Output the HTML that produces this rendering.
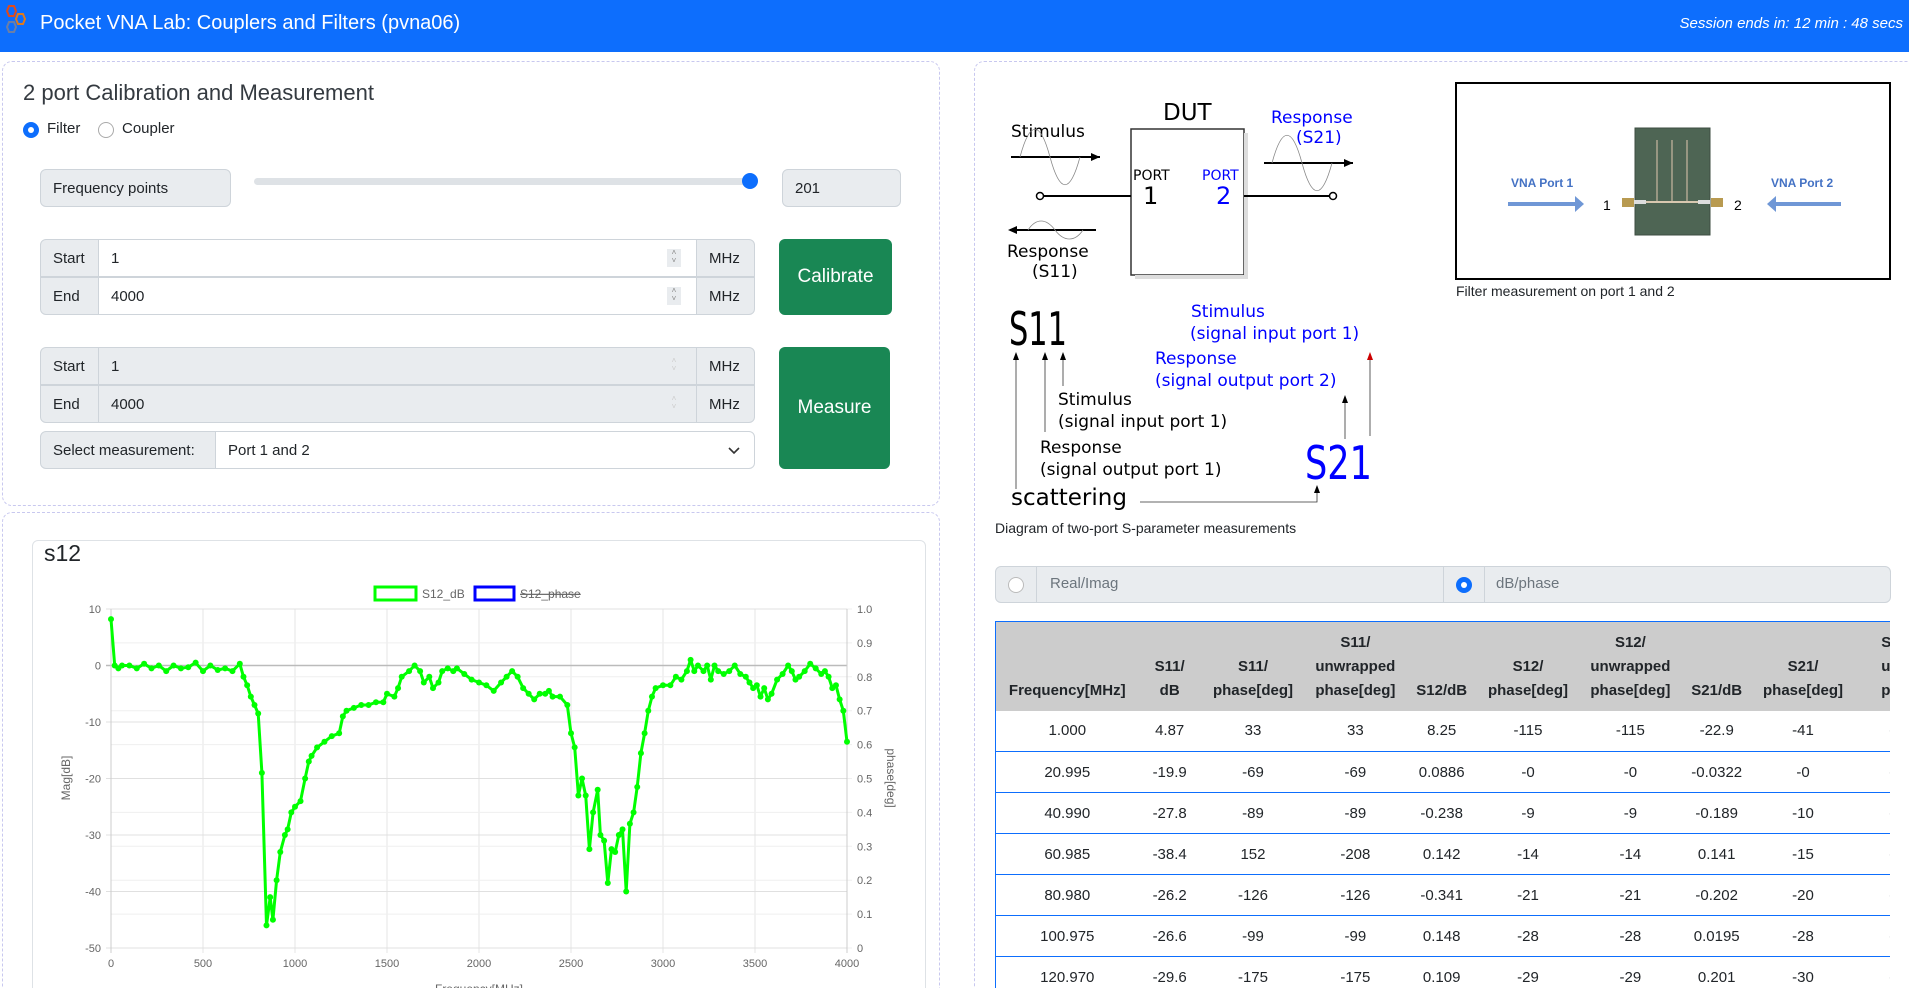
<!DOCTYPE html>
<html><head><meta charset="utf-8">
<style>
*{box-sizing:border-box;margin:0;padding:0}
html,body{width:1909px;height:988px;overflow:hidden}
body{background:#fff;font-family:"Liberation Sans",sans-serif;color:#212529}
#wrap{position:relative;width:1909px;height:988px;overflow:hidden}
.abs{position:absolute}
.nav{left:0;top:0;width:1909px;height:52px;background:#0d6efd}
.card{border:1px dashed #c8c8ef;border-radius:10px}
.lbl{position:absolute;background:#e9ecef;border:1px solid #ced4da;font-size:15px;display:flex;align-items:center;padding-left:12px}
.inp{position:absolute;background:#fff;border:1px solid #ced4da;font-size:15px;display:flex;align-items:center;padding-left:12px}
.btn{position:absolute;background:#198754;color:#fff;border-radius:6px;font-size:19px;display:flex;align-items:center;justify-content:center}
.spin{position:absolute;width:14px;height:18px;background:#e9ecef;font-size:8px;color:#888;line-height:8px;text-align:center}
table{border-collapse:collapse;font-size:15px;table-layout:fixed}
</style></head><body><div id="wrap">
<div class="abs nav"></div>
<svg class="abs" style="left:2px;top:4px" width="30" height="32" viewBox="0 0 30 32">
<polygon points="7,2 12,2 14,7 12,12 7,12 5,7" fill="none" stroke="#e04a1c" stroke-width="2"/>
<polygon points="16,10 21,10 23,15 21,20 16,20 14,15" fill="none" stroke="#e07a1c" stroke-width="2"/>
<polygon points="7,18 12,18 14,23 12,28 7,28 5,23" fill="none" stroke="#6b7fa6" stroke-width="2"/>
</svg>
<div class="abs" style="left:40px;top:12px;font-size:20px;color:#fff">Pocket VNA Lab: Couplers and Filters (pvna06)</div>
<div class="abs" style="right:6px;top:15px;font-size:15px;color:#fff;font-style:italic">Session ends in: 12 min : 48 secs</div>

<div class="abs card" style="left:2px;top:61px;width:938px;height:445px"></div>
<div class="abs" style="left:23px;top:80px;font-size:22px;color:#343a40">2 port Calibration and Measurement</div>
<div class="abs" style="left:23px;top:122px;width:16px;height:16px;border-radius:50%;background:#0d6efd"></div>
<div class="abs" style="left:28px;top:127px;width:6px;height:6px;border-radius:50%;background:#fff"></div>
<div class="abs" style="left:47px;top:120px;font-size:15px">Filter</div>
<div class="abs" style="left:98px;top:122px;width:16px;height:16px;border-radius:50%;border:1px solid #aaa"></div>
<div class="abs" style="left:122px;top:120px;font-size:15px">Coupler</div>

<div class="lbl" style="left:40px;top:169px;width:191px;height:38px;border-radius:6px">Frequency points</div>
<div class="abs" style="left:254px;top:178px;width:503px;height:7px;border-radius:4px;background:#dee2e6"></div>
<div class="abs" style="left:742px;top:173px;width:16px;height:16px;border-radius:50%;background:#0d6efd"></div>
<div class="lbl" style="left:782px;top:169px;width:119px;height:38px;border-radius:6px">201</div>

<div class="lbl" style="left:40px;top:239px;width:59px;height:38px;border-radius:6px 0 0 0">Start</div>
<div class="inp" style="left:98px;top:239px;width:599px;height:38px">1</div>
<div class="spin" style="left:667px;top:249px">˄<br>˅</div>
<div class="lbl" style="left:696px;top:239px;width:59px;height:38px;border-radius:0 6px 0 0">MHz</div>
<div class="lbl" style="left:40px;top:277px;width:59px;height:38px;border-radius:0 0 0 6px">End</div>
<div class="inp" style="left:98px;top:277px;width:599px;height:38px">4000</div>
<div class="spin" style="left:667px;top:287px">˄<br>˅</div>
<div class="lbl" style="left:696px;top:277px;width:59px;height:38px;border-radius:0 0 6px 0">MHz</div>
<div class="btn" style="left:779px;top:239px;width:113px;height:76px">Calibrate</div>

<div class="lbl" style="left:40px;top:347px;width:59px;height:38px;border-radius:6px 0 0 0">Start</div>
<div class="lbl" style="left:98px;top:347px;width:599px;height:38px">1</div>
<div class="lbl" style="left:696px;top:347px;width:59px;height:38px;border-radius:0 6px 0 0">MHz</div>
<div class="lbl" style="left:40px;top:385px;width:59px;height:38px;border-radius:0 0 0 6px">End</div>
<div class="lbl" style="left:98px;top:385px;width:599px;height:38px">4000</div>
<div class="lbl" style="left:696px;top:385px;width:59px;height:38px;border-radius:0 0 6px 0">MHz</div>
<div class="spin" style="left:667px;top:357px;background:none;color:#ccc">˄<br>˅</div>
<div class="spin" style="left:667px;top:395px;background:none;color:#ccc">˄<br>˅</div>
<div class="lbl" style="left:40px;top:431px;width:176px;height:38px;border-radius:6px 0 0 6px">Select measurement:</div>
<div class="inp" style="left:215px;top:431px;width:540px;height:38px;border-radius:0 6px 6px 0">Port 1 and 2</div>
<svg class="abs" style="left:727px;top:444px" width="14" height="12"><path d="M2 4 L7 9 L12 4" fill="none" stroke="#333" stroke-width="1.6"/></svg>
<div class="btn" style="left:779px;top:347px;width:111px;height:122px">Measure</div>

<div class="abs card" style="left:2px;top:512px;width:938px;height:560px"></div>
<div class="abs" style="left:32px;top:540px;width:894px;height:520px;border:1px solid #dee2e6;border-radius:6px"></div>
<div class="abs" style="left:44px;top:540px;font-size:23px">s12</div>
<svg class="abs" style="left:0;top:0" width="940" height="988" id="chart">
<g id="grid"></g>
<rect x="375" y="587" width="41" height="13" fill="none" stroke="#00ff00" stroke-width="3"/>
<text x="422" y="598" font-size="12" fill="#666" font-family="Liberation Sans">S12_dB</text>
<rect x="475" y="587" width="39" height="13" fill="none" stroke="#0000ff" stroke-width="3"/>
<text x="520" y="598" font-size="12" fill="#666" font-family="Liberation Sans" text-decoration="line-through">S12_phase</text>
<text transform="translate(70,778) rotate(-90)" text-anchor="middle" font-size="12" fill="#666" font-family="Liberation Sans">Mag[dB]</text>
<text transform="translate(887,778) rotate(90)" text-anchor="middle" font-size="12" fill="#666" font-family="Liberation Sans">phase[deg]</text>
<text x="479" y="993" text-anchor="middle" font-size="12" fill="#666" font-family="Liberation Sans">Frequency[MHz]</text>
<g id="data"></g>
</svg>

<div class="abs card" style="left:974px;top:61px;width:950px;height:1000px"></div>
<svg class="abs" style="left:0;top:0" width="1909" height="560" font-family="DejaVu Sans,sans-serif">
<text x="1163" y="120" font-size="23">DUT</text>
<rect x="1131" y="129" width="113" height="146" fill="#fff" stroke="#333" stroke-width="1.5"/>
<rect x="1244" y="133" width="4" height="146" fill="#ddd"/>
<rect x="1135" y="275" width="113" height="4" fill="#ddd"/>
<text x="1011" y="137" font-size="17">Stimulus</text>
<path d="M1011 157 H1100" stroke="#000" stroke-width="2"/><path d="M1100 157 l-9 -4 v8z"/>
<path d="M1020 157 C1030 120 1040 120 1050 157 S1070 194 1080 157" fill="none" stroke="#888" stroke-width="0.8"/>
<text x="1133" y="180" font-size="14">PORT</text><text x="1143" y="204" font-size="24">1</text>
<text x="1202" y="180" font-size="14" fill="#00f">PORT</text><text x="1216" y="204" font-size="24" fill="#00f">2</text>
<path d="M1043 196 H1131 M1244 196 H1329" stroke="#000" stroke-width="2"/>
<circle cx="1040" cy="196" r="3.5" fill="#fff" stroke="#000" stroke-width="1.5"/>
<circle cx="1333" cy="196" r="3.5" fill="#fff" stroke="#000" stroke-width="1.5"/>
<text x="1271" y="123" font-size="17" fill="#00f">Response</text><text x="1296" y="143" font-size="17" fill="#00f">(S21)</text>
<path d="M1264 163 H1353" stroke="#000" stroke-width="2"/><path d="M1353 163 l-9 -4 v8z"/>
<path d="M1272 163 C1282 126 1292 126 1302 163 S1322 200 1332 163" fill="none" stroke="#888" stroke-width="0.8"/>
<path d="M1010 230 H1096" stroke="#000" stroke-width="2"/><path d="M1008 230 l9 -4 v8z"/>
<path d="M1028 230 C1036 218 1046 218 1055 230 S1075 242 1083 230" fill="none" stroke="#888" stroke-width="0.8"/>
<text x="1007" y="257" font-size="17">Response</text><text x="1032" y="277" font-size="17">(S11)</text>
<text x="1009" y="345" font-size="46" textLength="58" lengthAdjust="spacingAndGlyphs">S11</text>
<text x="1191" y="317" font-size="17" fill="#00f">Stimulus</text>
<text x="1190" y="339" font-size="17" fill="#00f">(signal input port 1)</text>
<text x="1155" y="364" font-size="17" fill="#00f">Response</text>
<text x="1155" y="386" font-size="17" fill="#00f">(signal output port 2)</text>
<text x="1058" y="405" font-size="17">Stimulus</text>
<text x="1058" y="427" font-size="17">(signal input port 1)</text>
<text x="1040" y="453" font-size="17">Response</text>
<text x="1040" y="475" font-size="17">(signal output port 1)</text>
<text x="1305" y="479" font-size="46" fill="#00f" textLength="67" lengthAdjust="spacingAndGlyphs">S21</text>
<text x="1011" y="505" font-size="23">scattering</text>
<g stroke="#333" stroke-width="0.8" fill="none">
<path d="M1016 489 V356 M1045 432 V356 M1063 386 V356 M1345 439 V398 M1140 502 H1317 V488"/>
</g>
<path d="M1370 436 V356" stroke="#333" stroke-width="0.8"/>
<path d="M1016 352 l-3 8 h6z M1045 352 l-3 8 h6z M1063 352 l-3 8 h6z M1345 395 l-3 8 h6z M1317 485 l-3 8 h6z"/>
<path d="M1370 352 l-3 8 h6z" fill="#c00"/>
<text x="995" y="533" font-size="14" fill="#212529" font-family="Liberation Sans">Diagram of two-port S-parameter measurements</text>
<rect x="1456" y="83" width="434" height="196" fill="#fff" stroke="#000" stroke-width="2"/>
<text x="1456" y="296" font-size="14" fill="#212529" font-family="Liberation Sans">Filter measurement on port 1 and 2</text>
<rect x="1635" y="128" width="75" height="107" fill="#4e6554" stroke="#3d4d42"/>
<path d="M1657 140 V202 M1672 140 V202 M1687 140 V202" stroke="#c8b8a0" stroke-width="1.2"/>
<path d="M1640 202 H1705" stroke="#d8c8b0" stroke-width="2"/>
<rect x="1622" y="198" width="12" height="9" fill="#b89a50"/><rect x="1711" y="198" width="12" height="9" fill="#b89a50"/>
<rect x="1634" y="200" width="12" height="4" fill="#ddd"/><rect x="1698" y="200" width="12" height="4" fill="#ddd"/>
<text x="1511" y="187" font-size="12" font-weight="bold" fill="#4472c4" font-family="Liberation Sans">VNA Port 1</text>
<text x="1771" y="187" font-size="12" font-weight="bold" fill="#4472c4" font-family="Liberation Sans">VNA Port 2</text>
<path d="M1508 204 H1576" stroke="#6f97d6" stroke-width="4"/><path d="M1584 204 l-9 -8 v16z" fill="#6f97d6"/>
<path d="M1776 204 H1841" stroke="#6f97d6" stroke-width="4"/><path d="M1767 204 l9 -8 v16z" fill="#6f97d6"/>
<text x="1603" y="210" font-size="14" font-family="Liberation Sans">1</text>
<text x="1734" y="210" font-size="14" font-family="Liberation Sans">2</text>
</svg>

<div class="abs" style="left:995px;top:566px;width:896px;height:37px;background:#e9ecef;border:1px solid #ced4da;border-radius:6px"></div>
<div class="abs" style="left:1036px;top:566px;width:1px;height:37px;background:#ced4da"></div>
<div class="abs" style="left:1443px;top:566px;width:1px;height:37px;background:#ced4da"></div>
<div class="abs" style="left:1484px;top:566px;width:1px;height:37px;background:#ced4da"></div>
<div class="abs" style="left:1008px;top:577px;width:16px;height:16px;border-radius:50%;border:1px solid #bbb;background:#fff"></div>
<div class="abs" style="left:1456px;top:577px;width:16px;height:16px;border-radius:50%;background:#0d6efd"></div>
<div class="abs" style="left:1461px;top:582px;width:6px;height:6px;border-radius:50%;background:#fff"></div>
<div class="abs" style="left:1050px;top:575px;font-size:15px;color:#6c757d">Real/Imag</div>
<div class="abs" style="left:1496px;top:575px;font-size:15px;color:#6c757d">dB/phase</div>

<div class="abs" style="left:995px;top:621px;width:895px;height:380px;overflow:hidden;border-left:1.5px solid #0d6efd">
<table id="tbl" style="position:absolute;left:0;top:0;width:1030px"></table>
</div>
</div>
<script>
(function(){
var ns="http://www.w3.org/2000/svg";
var g=document.getElementById('grid'),d=document.getElementById('data');
function el(p,tag,a){var e=document.createElementNS(ns,tag);for(var k in a)e.setAttribute(k,a[k]);p.appendChild(e);return e;}
function X(f){return 111+f/4000*736}function Y(db){return 609+(10-db)*5.65}
for(var i=0;i<=8;i++){var x=X(i*500);el(g,'line',{x1:x,y1:609,x2:x,y2:953,stroke:'#e6e6e6'});var t=el(g,'text',{x:x,y:967,'text-anchor':'middle','font-size':11,fill:'#666','font-family':'Liberation Sans'});t.textContent=i*500;}
for(var i=0;i<=10;i++){var y=609+i*33.9;el(g,'line',{x1:111,y1:y,x2:852,y2:y,stroke:'#efefef'});var t=el(g,'text',{x:857,y:y+4,'font-size':11,fill:'#666','font-family':'Liberation Sans'});var v=(1-i/10);t.textContent=i==10?'0':v.toFixed(1);}
for(var i=0;i<=6;i++){var y=609+i*56.5;el(g,'line',{x1:106,y1:y,x2:847,y2:y,stroke:i==1?'#bbb':'#e0e0e0','stroke-width':i==1?1.5:1});var t=el(g,'text',{x:101,y:y+4,'text-anchor':'end','font-size':11,fill:'#666','font-family':'Liberation Sans'});t.textContent=10-i*10;}
el(g,'line',{x1:111,y1:609,x2:111,y2:953,stroke:'#ccc'});el(g,'line',{x1:847,y1:609,x2:847,y2:953,stroke:'#ccc'});
var P=[[0,8.2],[20,0],[40,-0.5],[60,0],[100,0],[140,-0.5],[180,0.3],[220,-0.5],[260,0],[300,-1],[340,0],[380,-0.5],[420,-0.3],[460,0.5],[500,-1],[540,0],[580,-0.8],[620,-0.5],[660,-1],[700,0.3],[720,-2],[740,-3.5],[760,-5.5],[780,-7],[800,-8.5],[820,-19],[845,-46],[865,-41],[880,-45],[900,-38],[920,-33],[945,-30],[960,-29],[980,-26],[1000,-25],[1030,-24],[1055,-20],[1075,-17],[1090,-16],[1120,-14.5],[1160,-13.5],[1200,-12.5],[1240,-12],[1260,-9],[1280,-8],[1320,-7.5],[1360,-7],[1400,-7],[1440,-6.5],[1480,-6.5],[1500,-5],[1540,-5.5],[1560,-4],[1580,-2],[1620,-1],[1650,0],[1680,-1],[1700,-3],[1730,-2],[1750,-4],[1780,-3],[1800,-1],[1830,-0.5],[1860,-1],[1880,-0.5],[1920,-1.5],[1960,-2.5],[2000,-3],[2040,-3.5],[2080,-4.5],[2120,-3],[2150,-2],[2180,-1],[2210,-2],[2240,-4],[2270,-5],[2300,-6],[2330,-5],[2360,-5],[2380,-4.5],[2400,-5.5],[2440,-5.5],[2480,-7],[2500,-12],[2520,-14.5],[2540,-23],[2560,-20],[2580,-23],[2600,-32.5],[2620,-26],[2645,-22],[2660,-30],[2680,-31],[2700,-38.5],[2720,-32.5],[2740,-33],[2760,-30],[2780,-29],[2800,-40],[2820,-28],[2840,-26],[2860,-21.5],[2880,-15.5],[2900,-12],[2920,-8],[2940,-5.5],[2960,-4],[3000,-3.5],[3040,-3.5],[3070,-2],[3100,-2.5],[3130,-1],[3150,1],[3170,-1],[3190,0],[3220,-1],[3240,0],[3260,-2.5],[3280,0],[3300,-1],[3330,-1.5],[3360,-1],[3390,0],[3420,-1.5],[3450,-2],[3470,-3],[3490,-4],[3510,-3.5],[3530,-5.5],[3550,-4],[3570,-6],[3590,-5],[3620,-2.5],[3650,-1.5],[3680,0],[3700,-1],[3720,-2.5],[3740,-2],[3770,-1],[3800,0.3],[3830,-0.5],[3860,-1.5],[3880,-1],[3900,-2],[3920,-4],[3940,-3.5],[3960,-6],[3980,-8],[4000,-13.5]];
var pts=P.map(function(p){return X(p[0]).toFixed(1)+','+Y(p[1]).toFixed(1)}).join(' ');
el(d,'polyline',{points:pts,fill:'none',stroke:'#00ff00','stroke-width':3,'stroke-linejoin':'round'});
P.forEach(function(p){el(d,'circle',{cx:X(p[0]),cy:Y(p[1]),r:3,fill:'#00ff00'});});
var H=['Frequency[MHz]','S11/<br>dB','S11/<br>phase[deg]','S11/<br>unwrapped<br>phase[deg]','S12/dB','S12/<br>phase[deg]','S12/<br>unwrapped<br>phase[deg]','S21/dB','S21/<br>phase[deg]','S21/<br>unwrapped<br>phase[deg]'];
var W=[142,62,104,100,72,100,104,68,104,170];
var R=[['1.000','4.87','33','33','8.25','-115','-115','-22.9','-41','-41'],['20.995','-19.9','-69','-69','0.0886','-0','-0','-0.0322','-0','-0'],['40.990','-27.8','-89','-89','-0.238','-9','-9','-0.189','-10','-10'],['60.985','-38.4','152','-208','0.142','-14','-14','0.141','-15','-15'],['80.980','-26.2','-126','-126','-0.341','-21','-21','-0.202','-20','-20'],['100.975','-26.6','-99','-99','0.148','-28','-28','0.0195','-28','-28'],['120.970','-29.6','-175','-175','0.109','-29','-29','0.201','-30','-30'],['140.965','-30.1','-170','-170','0.1','-30','-30','0.1','-31','-31']];
var h='<colgroup>';W.forEach(function(w){h+='<col style="width:'+w+'px">';});h+='</colgroup>';
h+='<tr style="background:#ccc;height:89px;border-top:1.5px solid #0d6efd">';
H.forEach(function(t,i){h+='<th style="vertical-align:bottom;padding:0 0 8px;line-height:24px;text-align:'+(i==9?'left;padding-left:26px':'center')+';white-space:nowrap">'+t+'</th>';});
h+='</tr>';
R.forEach(function(r){h+='<tr style="height:41px;border-bottom:1.5px solid #0d6efd">';r.forEach(function(c,i){h+='<td style="text-align:'+(i==9?'left;padding-left:34px':'center')+'">'+c+'</td>';});h+='</tr>';});
document.getElementById('tbl').innerHTML=h;
})();
</script>
</body></html>
